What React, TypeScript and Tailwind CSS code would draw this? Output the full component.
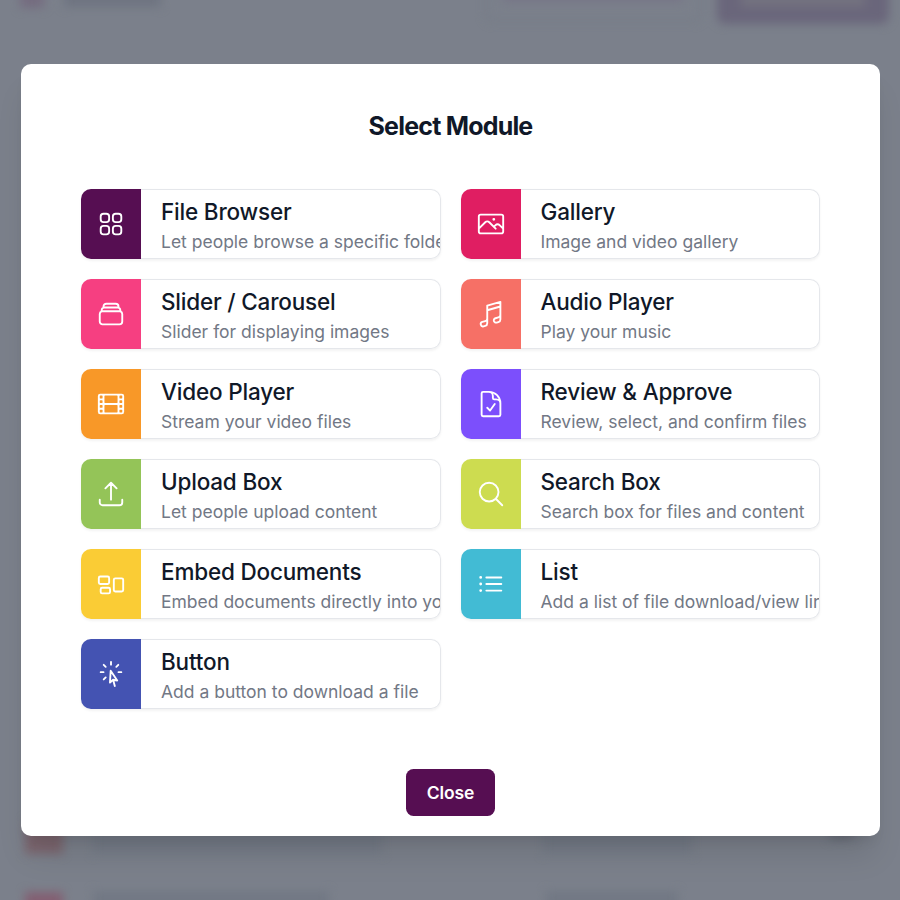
import React from "react";
import {
  HiOutlineSquares2X2,
  HiOutlinePhoto,
  HiOutlineRectangleStack,
  HiOutlineMusicalNote,
  HiOutlineFilm,
  HiOutlineDocumentCheck,
  HiOutlineArrowUpTray,
  HiOutlineMagnifyingGlass,
  HiOutlineRectangleGroup,
  HiOutlineListBullet,
  HiOutlineCursorArrowRays,
} from "react-icons/hi2";
import type { IconType } from "react-icons";

type Module = { name: string; text: string; color: string; Icon: IconType };

const modules: Module[] = [
  { name: "File Browser", text: "Let people browse a specific folder", color: "bg-[#560e52]", Icon: HiOutlineSquares2X2 },
  { name: "Gallery", text: "Image and video gallery", color: "bg-[#e01e62]", Icon: HiOutlinePhoto },
  { name: "Slider / Carousel", text: "Slider for displaying images", color: "bg-[#f63f81]", Icon: HiOutlineRectangleStack },
  { name: "Audio Player", text: "Play your music", color: "bg-[#f67066]", Icon: HiOutlineMusicalNote },
  { name: "Video Player", text: "Stream your video files", color: "bg-[#f89828]", Icon: HiOutlineFilm },
  { name: "Review & Approve", text: "Review, select, and confirm files", color: "bg-[#7c4ffc]", Icon: HiOutlineDocumentCheck },
  { name: "Upload Box", text: "Let people upload content", color: "bg-[#94c458]", Icon: HiOutlineArrowUpTray },
  { name: "Search Box", text: "Search box for files and content", color: "bg-[#cddc50]", Icon: HiOutlineMagnifyingGlass },
  { name: "Embed Documents", text: "Embed documents directly into your website", color: "bg-[#facc35]", Icon: HiOutlineRectangleGroup },
  { name: "List", text: "Add a list of file download/view links", color: "bg-[#42bbd4]", Icon: HiOutlineListBullet },
  { name: "Button", text: "Add a button to download a file", color: "bg-[#4453b2]", Icon: HiOutlineCursorArrowRays },
];

function ModuleCard({ name, text, color, Icon }: Module) {
  return (
    <button className="flex h-[70px] min-w-0 rounded-[10px] text-left shadow-[0_1.25px_2.5px_rgba(0,0,0,0.05)]">
      <span className={`flex w-[60px] shrink-0 items-center justify-center self-stretch rounded-l-[10px] text-white ${color}`}>
        <Icon className="size-[30px]" />
      </span>
      <span className="flex h-full min-w-0 flex-1 flex-col justify-center overflow-hidden rounded-r-[10px] border-y border-r border-gray-200 bg-white pl-5 whitespace-nowrap">
        <span className="text-[22.5px] leading-[35px] font-medium tracking-[-0.19px] text-gray-900">{name}</span>
        <span className="text-[17.5px] leading-[25px] text-[#727885]">{text}</span>
      </span>
    </button>
  );
}

/* Page content softened behind the dialog; it runs past the window at the top and bottom. */
function Backdrop() {
  return (
    <div className="absolute inset-0 overflow-hidden bg-[#7b808b]">
      <div className="-my-5 flex h-[940px] flex-col justify-between blur-[5px]">
        <div className="flex h-[44px] shrink-0 items-start pr-[11px] pl-5">
          <div className="h-[28px] w-6 bg-[#756c80]" />
          <div className="ml-5 h-[27px] w-[97px] bg-[#6f7481]" />
          <div className="ml-auto h-[42px] w-[216px] rounded-b-lg border-2 border-t-0 border-[#747984] px-4">
            <div className="h-[22px] bg-[#777587]" />
          </div>
          <div className="ml-4 h-[44px] w-[172px] rounded-b-lg bg-[#6a667b] px-6">
            <div className="h-[27px] bg-[#73727f]" />
          </div>
        </div>
        <div className="flex h-[100px] shrink-0 flex-col justify-between pl-[25px]">
          <div className="flex h-[34px] items-end">
            <div className="h-full w-[38px] bg-[#7c666f]" />
            <div className="ml-[30px] h-[30px] w-[290px] bg-[#757b87]" />
            <div className="ml-[160px] h-[30px] w-[150px] bg-[#757b87]" />
            <div className="mb-[14px] ml-[136px] h-[18px] w-[24px] bg-[#6b707c]" />
          </div>
          <div className="flex h-[29px] items-end">
            <div className="h-[28px] w-[38px] bg-[#835f72]" />
            <div className="ml-[30px] h-full w-[236px] bg-[#727884]" />
            <div className="ml-[217px] h-full w-[132px] bg-[#727884]" />
          </div>
        </div>
      </div>
    </div>
  );
}

export default function App() {
  return (
    <div className="relative h-[900px] w-[900px] overflow-hidden pt-16 pl-[21px] font-['Inter',sans-serif]">
      <Backdrop />
      <div className="relative flex h-[772px] w-[859px] flex-col items-center rounded-[10px] bg-white px-[60px] pt-[46px] shadow-[0_25px_31px_-6px_rgba(0,0,0,0.1),0_10px_12.5px_-7.5px_rgba(0,0,0,0.1)]">
        <h2 className="text-[25px] leading-[32px] font-bold tracking-[-0.8px] text-gray-900">Select Module</h2>
        <div className="mt-[47px] grid w-full grid-cols-2 gap-5">
          {modules.map((m) => (
            <ModuleCard key={m.name} {...m} />
          ))}
        </div>
        <button className="mt-[60px] flex h-[47px] w-[89px] items-center justify-center rounded-[7.5px] bg-[#560e52] pt-px text-[17.5px] font-semibold tracking-[-0.1px] text-white">
          Close
        </button>
      </div>
    </div>
  );
}
